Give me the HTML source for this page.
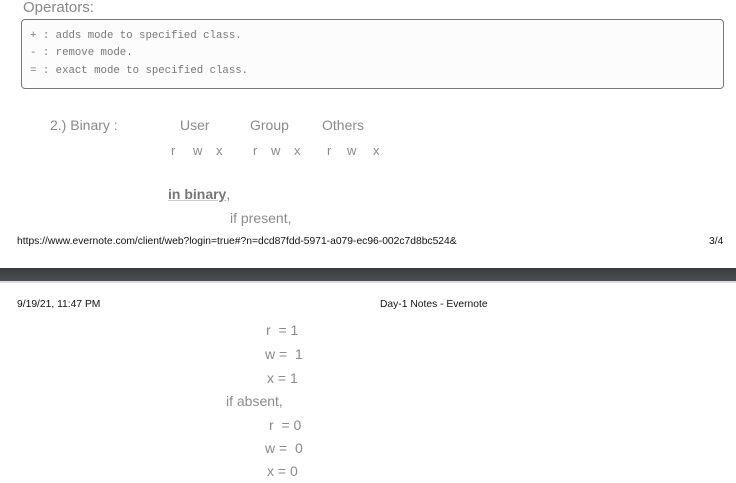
<!DOCTYPE html><html><head><style>
body{margin:0;width:736px;height:483px;background:#fff;position:relative;overflow:hidden;font-family:"Liberation Sans",sans-serif;color:#888}
.a{position:absolute;white-space:pre}
.m{font-family:"Liberation Mono",monospace;font-size:10.7px;color:#777}
.s{font-size:14px;color:#8a8a8a}
.h{font-size:10.3px;color:#111}
</style></head><body>
<div class="a" style="left:23px;top:-1px;font-size:15px;color:#888">Operators:</div>
<div style="position:absolute;left:21px;top:19px;width:701px;height:68px;border:1px solid #777;border-radius:4px;background:#fcfcfc"></div>
<div class="a m" style="left:30px;top:30px">+ : adds mode to specified class.</div>
<div class="a m" style="left:30px;top:47px">- : remove mode.</div>
<div class="a m" style="left:30px;top:65px">= : exact mode to specified class.</div>
<div class="a s" style="left:50px;top:117px">2.) Binary :</div>
<div class="a s" style="left:180px;top:117px">User</div>
<div class="a s" style="left:250px;top:117px">Group</div>
<div class="a s" style="left:322px;top:117px">Others</div>
<div class="a s" style="left:171px;top:143px;font-size:13px">r</div>
<div class="a s" style="left:193px;top:143px;font-size:13px">w</div>
<div class="a s" style="left:216px;top:143px;font-size:13px">x</div>
<div class="a s" style="left:253px;top:143px;font-size:13px">r</div>
<div class="a s" style="left:271px;top:143px;font-size:13px">w</div>
<div class="a s" style="left:294px;top:143px;font-size:13px">x</div>
<div class="a s" style="left:327px;top:143px;font-size:13px">r</div>
<div class="a s" style="left:347px;top:143px;font-size:13px">w</div>
<div class="a s" style="left:373px;top:143px;font-size:13px">x</div>
<div class="a s" style="left:168px;top:186px;font-weight:bold;color:#777;text-decoration:underline;text-decoration-color:#ccc">in binary<span style="font-weight:normal;text-decoration:none">,</span></div>
<div class="a s" style="left:230px;top:210px">if present,</div>
<div class="a h" style="left:17px;top:236px">https://www.evernote.com/client/web?login=true#?n=dcd87fdd-5971-a079-ec96-002c7d8bc524&amp;</div>
<div class="a h" style="left:709px;top:236px">3/4</div>
<div style="position:absolute;left:0;top:268px;width:736px;height:13px;background:linear-gradient(#3a3d40,#4a4e52)"></div>
<div style="position:absolute;left:0;top:281px;width:736px;height:2px;background:#ddd"></div>
<div class="a h" style="left:17px;top:299px">9/19/21, 11:47 PM</div>
<div class="a h" style="left:380px;top:299px">Day-1 Notes - Evernote</div>
<div class="a s" style="left:266px;top:322px">r  = 1</div>
<div class="a s" style="left:265px;top:346px">w =  1</div>
<div class="a s" style="left:267px;top:370px">x = 1</div>
<div class="a s" style="left:226px;top:393px">if absent,</div>
<div class="a s" style="left:269px;top:417px">r  = 0</div>
<div class="a s" style="left:265px;top:440px">w =  0</div>
<div class="a s" style="left:267px;top:463px">x = 0</div>
</body></html>
